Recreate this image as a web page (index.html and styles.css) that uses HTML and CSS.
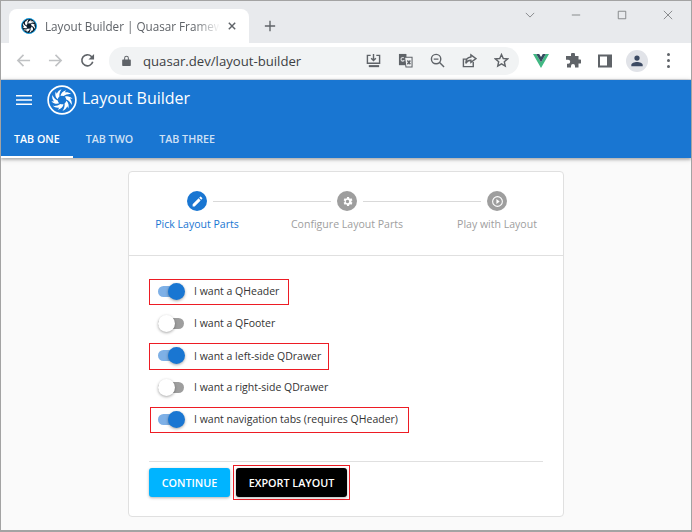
FILE: index.html
```html
<!DOCTYPE html>
<html lang="en">
<head>
<meta charset="utf-8">
<title>Layout Builder | Quasar Framework</title>
<link rel="stylesheet" href="styles.css">
</head>
<body>
<svg class="defs" width="0" height="0" aria-hidden="true">
  <defs>
    <g id="blades">
      <path id="blade" d="M-1.6-4.4 C-1.2-7.4 1.2-9.6 4.6-10.4 L2.9-8.2 C6-8.5 8-7.8 9.8-6.2 C6.8-6.6 3.8-5.8 1.8-4.2 A4.6 4.6 0 0 0-1.6-4.4Z"/>
      <use href="#blade" transform="rotate(60)"/>
      <use href="#blade" transform="rotate(120)"/>
      <use href="#blade" transform="rotate(180)"/>
      <use href="#blade" transform="rotate(240)"/>
      <use href="#blade" transform="rotate(300)"/>
    </g>
  </defs>
</svg>
<div class="window">
  <div class="tabstrip">
    <div class="browser-tab">
      <svg class="favicon" viewBox="-16 -16 32 32"><circle r="15" fill="#0b1c2c" stroke="#19a4e8" stroke-width="2"/><use href="#blades" fill="#fff" transform="scale(1.15)"/></svg>
      <span class="browser-tab-title">Layout Builder | Quasar Framework</span>
      <svg class="tab-close" viewBox="0 0 10 10"><path d="M1 1l8 8M9 1l-8 8"/></svg>
    </div>
    <svg class="new-tab" viewBox="0 0 14 14"><path d="M7 1v12M1 7h12"/></svg>
    <div class="caption">
      <svg class="cap" viewBox="0 0 12 12"><path d="M1 3.5l5 5 5-5"/></svg>
      <svg class="cap" viewBox="0 0 12 12"><path d="M1 6h10"/></svg>
      <svg class="cap" viewBox="0 0 12 12"><path d="M1.5 1.5h9v9h-9z"/></svg>
      <svg class="cap" viewBox="0 0 12 12"><path d="M1 1l10 10M11 1L1 11"/></svg>
    </div>
  </div>

  <div class="toolbar">
    <svg class="nav nav-off" viewBox="0 0 16 16"><path d="M15 8H2M8 2L2 8l6 6"/></svg>
    <svg class="nav nav-off" viewBox="0 0 16 16"><path d="M1 8h13M8 2l6 6-6 6"/></svg>
    <svg class="nav nav-on" viewBox="0 0 16 16"><path d="M13.6 9.4A5.9 5.9 0 1 1 12.2 3.8L14 5.6"/><path class="solid" d="M15 1v6H9z"/></svg>
    <div class="omnibox">
      <svg class="lock" viewBox="0 0 10 12"><path d="M1 5h8a.8.8 0 0 1 .8.8v5.4a.8.8 0 0 1-.8.8H1a.8.8 0 0 1-.8-.8V5.800A.8.8 0 0 1 1 5zM2.400 5V3.200a2.600 2.600 0 0 1 5.200 0V5H6.500V3.200a1.500 1.500 0 0 0-3 0V5z"/></svg>
      <span class="url">quasar.dev/layout-builder</span>
      <div class="omni-icons">
        <svg class="omni" viewBox="0 0 16 16"><path d="M5 2.500H1.500v8.500h13V2.500H11M8 1v7M5.500 5.500L8 8l2.500-2.500"/><path class="thick" d="M3 14h11"/></svg>
        <svg class="omni" viewBox="0 0 16 16"><path class="solid" d="M1 1h8v12H1z"/><path class="ghost" d="M6.500 5.200A2 2 0 1 0 6.800 8H5"/><path class="pane" d="M7 4.500h8v10.500H8.500z"/><path d="M10 8l3.200 4M13.200 8L10 12"/></svg>
        <svg class="omni" viewBox="0 0 16 16"><circle cx="6.500" cy="6.500" r="5"/><path d="M10.200 10.200L15 15M4 6.500h5"/></svg>
        <svg class="omni" viewBox="0 0 16 16"><path d="M12 9.500V14.500H1.500V6.500H5M9.500 2l5.500 4-5.500 4V7.800C6.500 7.800 5 9 4 11c0-4 2-6.500 5.500-6.800z"/></svg>
        <svg class="omni" viewBox="0 0 16 16"><path d="M8 1.600l1.900 4.300 4.600.4-3.500 3 1 4.600L8 11.500l-4 2.400 1-4.600-3.500-3 4.600-.4z"/></svg>
      </div>
    </div>
    <div class="extensions">
      <svg class="ext" viewBox="0 0 16 14"><path fill="#41b883" d="M0 0h3.200L8 8.300 12.800 0H16L8 14z"/><path fill="#34495e" d="M3.200 0h3L8 3.100 9.800 0h3L8 8.300z"/></svg>
      <svg class="ext" viewBox="0 0 16 16"><path fill="#5f6368" d="M6 1.500a2 2 0 0 1 4 0V3h3.500v3.500H15a2 2 0 0 1 0 4h-1.500V14.500H10V13a2 2 0 0 0-4 0v1.500H2V10.800h1.200a2 2 0 0 0 0-4H1V3h5z"/></svg>
      <svg class="ext" viewBox="0 0 16 16"><path fill="#5f6368" fill-rule="evenodd" d="M1 1.500h14v13H1zM3 3.500v9h7v-9z"/></svg>
      <div class="avatar"><svg viewBox="0 0 16 16"><circle cx="8" cy="4.700" r="3" fill="#3c4a63"/><path fill="#3c4a63" d="M1.500 14v-1.500C1.500 10 5 9 8 9s6.500 1 6.500 3.500V14z"/></svg></div>
      <div class="kebab"><i></i><i></i><i></i></div>
    </div>
  </div>

  <header class="app-header">
    <div class="app-bar">
      <svg class="menu" viewBox="0 0 16 10"><path d="M0 .8h16M0 5h16M0 9.200h16"/></svg>
      <svg class="logo" viewBox="-16 -16 32 32"><circle r="14.800" fill="none" stroke="#fff" stroke-width="1.800"/><use href="#blades" fill="#fff"/></svg>
      <span class="app-title">Layout Builder</span>
    </div>
    <nav class="app-tabs">
      <a class="app-tab app-tab-active">Tab One</a>
      <a class="app-tab">Tab Two</a>
      <a class="app-tab">Tab Three</a>
    </nav>
  </header>

  <main class="page">
    <section class="card">
      <div class="stepper">
        <div class="step-icons">
          <span class="dot dot-active"><svg viewBox="0 0 24 24"><path fill="#fff" d="M3 17.250V21h3.750L17.810 9.940l-3.750-3.750zM20.710 7.040a1 1 0 0 0 0-1.410l-2.340-2.340a1 1 0 0 0-1.410 0l-1.830 1.830 3.750 3.750z"/></svg></span>
          <span class="rail"></span>
          <span class="dot"><svg viewBox="0 0 24 24"><path fill="#fff" d="M19.140 12.940a7 7 0 0 0 0-1.880l2.030-1.580-1.920-3.320-2.390.96a7 7 0 0 0-1.620-.94L14.880 3.600h-3.760l-.36 2.580a7 7 0 0 0-1.620.94l-2.390-.96-1.920 3.320 2.030 1.580a7 7 0 0 0 0 1.880l-2.030 1.580 1.920 3.320 2.390-.96c.5.380 1.040.7 1.620.94l.36 2.580h3.760l.36-2.580a7 7 0 0 0 1.620-.94l2.390.96 1.920-3.320zM12 15.100a3.100 3.100 0 1 1 0-6.200 3.100 3.100 0 0 1 0 6.200z"/></svg></span>
          <span class="rail"></span>
          <span class="dot"><svg viewBox="0 0 24 24"><path fill="#fff" d="M10 16.500l6-4.500-6-4.500zM12 2a10 10 0 1 0 0 20 10 10 0 0 0 0-20zm0 18a8 8 0 1 1 0-16 8 8 0 0 1 0 16z"/></svg></span>
        </div>
        <div class="step-labels">
          <span class="step-label step-label-active"><b>Pick Layout Parts</b></span>
          <span class="step-label"><b>Configure Layout Parts</b></span>
          <span class="step-label"><b>Play with Layout</b></span>
        </div>
      </div>
      <div class="card-body">
        <ul class="options">
          <li class="option option-marked"><span class="toggle toggle-on"><i></i></span>I want a QHeader</li>
          <li class="option"><span class="toggle"><i></i></span>I want a QFooter</li>
          <li class="option option-marked option-tight"><span class="toggle toggle-on"><i></i></span>I want a left-side QDrawer</li>
          <li class="option"><span class="toggle"><i></i></span>I want a right-side QDrawer</li>
          <li class="option option-marked option-shift"><span class="toggle toggle-on"><i></i></span>I want navigation tabs (requires QHeader)</li>
        </ul>
        <div class="actions">
          <button class="btn btn-continue">Continue</button>
          <span class="export-mark"><button class="btn btn-export">Export Layout</button></span>
        </div>
      </div>
    </section>
  </main>
</div>
</body>
</html>
```

FILE: styles.css
```css
* { box-sizing: border-box; }
html, body { margin: 0; padding: 0; }
body { font-family: "Open Sans", "Noto Sans", "Liberation Sans", sans-serif; background: #fff; }
.defs { position: absolute; }
.window {
  width: 692px; height: 532px; overflow: hidden;
  border: 1px solid #a3a3a3; border-width: 1px 1px 2px 1px;
  display: flex; flex-direction: column;
}
svg { display: block; flex: none; }

/* tab strip */
.tabstrip { height: 42px; background: #e8eaed; display: flex; align-items: flex-end; flex: none; padding-left: 8px; }
.browser-tab {
  width: 240px; height: 34px; background: #fff; border-radius: 8px 8px 0 0;
  display: flex; align-items: center; padding: 0 12px; position: relative;
}
.favicon { width: 16px; height: 16px; margin-right: 8px; }
.browser-tab-title {
  width: 175px; font-size: 11.700px; color: #5f6368; white-space: nowrap; overflow: hidden;
  -webkit-mask-image: linear-gradient(90deg, #000 85%, transparent 100%);
  mask-image: linear-gradient(90deg, #000 85%, transparent 100%);
}
.tab-close { width: 8px; height: 8px; margin-left: 8px; fill: none; stroke: #5f6368; stroke-width: 1.800; }
.new-tab { width: 12px; height: 12px; margin: 0 0 11px 15px; fill: none; stroke: #5f6368; stroke-width: 1.600; }
.caption { margin-left: auto; align-self: flex-start; display: flex; gap: 36px; padding: 9px 18px 0 0; }
.cap { width: 10px; height: 10px; fill: none; stroke: #77797c; stroke-width: 1; }

/* toolbar */
.toolbar { height: 37px; background: #fff; display: flex; align-items: center; flex: none; border-bottom: 1px solid #dadce0; padding: 0 0 1px 15px; }
.nav { width: 15px; height: 15px; margin-right: 17px; fill: none; stroke-width: 1.700; }
.nav-off { stroke: #c0c2c4; }
.nav-on { stroke: #5f6368; margin-right: 14px; }
.nav-on .solid { fill: #5f6368; stroke: none; }
.omnibox { width: 410px; height: 28px; border-radius: 14px; background: #f1f3f4; display: flex; align-items: center; padding-left: 13px; }
.lock { width: 9px; height: 11px; fill: #5f6368; margin-right: 12px; }
.url { font-size: 13.150px; color: #3c4043; white-space: nowrap; }
.omni-icons { margin-left: auto; display: flex; gap: 17px; padding-right: 10px; }
.omni { width: 15px; height: 15px; fill: none; stroke: #5f6368; stroke-width: 1.500; }
.omni .solid { fill: #5f6368; stroke: none; }
.omni .ghost { stroke: #d5d7da; stroke-width: 1.200; }
.omni .pane { fill: #f1f3f4; stroke-width: 1.100; }
.omni .thick { stroke-width: 2.200; }
.extensions { display: flex; align-items: center; padding-left: 14px; }
.ext { width: 16px; height: 16px; margin-right: 16px; }
.avatar { width: 22px; height: 22px; border-radius: 50%; background: #e1e3e8; display: flex; align-items: center; justify-content: center; margin: 0 19px 0 -3px; }
.avatar svg { width: 14px; height: 14px; }
.kebab { display: flex; flex-direction: column; gap: 3px; }
.kebab i { width: 3px; height: 3px; border-radius: 50%; background: #5f6368; display: block; }

/* app header */
.app-header { background: #1976d2; color: #fff; height: 78px; flex: none; position: relative; z-index: 1; box-shadow: 0 1px 5px rgba(0,0,0,.25), 0 2px 2px rgba(0,0,0,.14); display: flex; flex-direction: column; }
.app-bar { height: 40px; display: flex; align-items: center; padding-left: 15px; }
.menu { width: 16px; height: 10px; fill: none; stroke: #fff; stroke-width: 1.500; margin-right: 15px; }
.logo { width: 30px; height: 30px; margin-right: 5px; }
.app-title { font-size: 16px; line-height: 36px; padding-bottom: 4px; }
.app-tabs { display: flex; height: 38px; }
.app-tab { padding: 1px 13px 0; line-height: 37px; font-size: 10.700px; font-weight: 600; text-transform: uppercase; color: rgba(255,255,255,.8); }
.app-tab-active { color: #fff; box-shadow: inset 0 -2px 0 #fff; }

/* page */
.page { flex: 1; background: #fafafa; display: flex; justify-content: center; padding-top: 13px; }
.card { width: 436px; height: 346px; background: #fff; border: 1px solid #e0e0e0; border-radius: 4px; display: flex; flex-direction: column; }
.stepper { height: 84px; border-bottom: 1px solid #e0e0e0; padding-top: 19px; flex: none; }
.step-icons { display: flex; align-items: center; padding-left: 58px; height: 20px; }
.dot { width: 20px; height: 20px; border-radius: 50%; background: #9e9e9e; display: flex; align-items: center; justify-content: center; flex: none; }
.dot svg { width: 13px; height: 13px; }
.dot-active { background: #1976d2; }
.rail { width: 118px; height: 1px; background: #d9d9d9; margin: 0 6px; }
.step-labels { display: flex; gap: 50px; padding: 5px 0 0 18px; }
.step-label { width: 100px; display: flex; justify-content: center; font-size: 10.550px; line-height: 16px; color: #9e9e9e; white-space: nowrap; }
.step-label b { font-weight: 400; }
.step-label-active { color: #1976d2; }
.card-body { flex: 1; display: flex; flex-direction: column; padding: 23px 20px 0; }
.options { list-style: none; margin: 0; padding: 0; display: flex; flex-direction: column; gap: 6px; align-items: flex-start; }
.option { height: 26px; display: flex; align-items: center; border: 1px solid transparent; padding: 0 9px 2px 8px; font-size: 10.500px; color: #333; white-space: nowrap; }
.option-marked { border-color: #ed1c24; }
.option-tight { padding-right: 7px; height: 27px; margin-bottom: -1px; }
.option-shift { margin-left: 1px; padding-left: 7px; padding-right: 10px; }
.toggle { width: 26px; height: 11px; border-radius: 6px; background: #9e9e9e; position: relative; margin-right: 10px; flex: none; }
.toggle i { position: absolute; left: 0; top: -3px; width: 17px; height: 17px; border-radius: 50%; background: #fff; box-shadow: 0 1px 3px rgba(0,0,0,.35); }
.toggle-on { background: #7eb0e6; }
.toggle-on i { left: 10px; background: #1976d2; }
.actions { margin-top: 28px; border-top: 1px solid #e0e0e0; padding-top: 3px; display: flex; align-items: center; }
.btn { border: 0; border-radius: 3px; height: 29px; font: 600 10.800px "Open Sans", "Noto Sans", sans-serif; text-transform: uppercase; color: #fff; box-shadow: 0 1px 3px rgba(0,0,0,.3); padding: 0; }
.btn-continue { width: 81px; background: #00b4ff; }
.export-mark { border: 1px solid #ed1c24; padding: 2px; margin-left: 3px; display: flex; }
.btn-export { width: 111px; background: #000; }
```
